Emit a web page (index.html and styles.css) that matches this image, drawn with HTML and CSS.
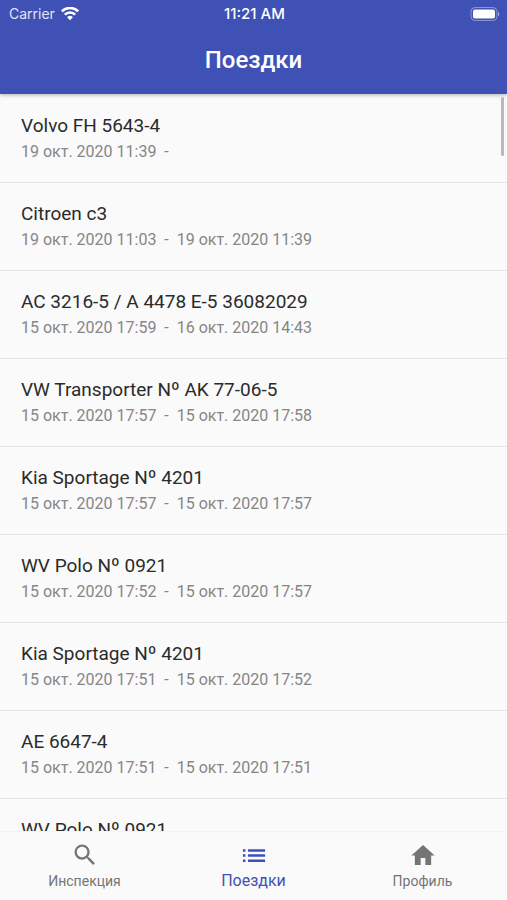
FILE: index.html
```html
<!DOCTYPE html>
<html lang="ru">
<head>
    <meta charset="UTF-8">
    <meta name="viewport" content="width=device-width, initial-scale=1.0">
    <title>Поездки</title>
    <link rel="stylesheet" href="styles.css">
</head>
<body>
    <header class="header">
        <div class="status-bar">
            <div class="carrier">
                <span>Carrier</span>
                <svg class="wifi" viewBox="0 0 18 14" fill="none" stroke="#fff" stroke-width="2.6">
                    <path d="M0.9 4.3a11.5 11.5 0 0 1 16.2 0"/>
                    <path d="M3.8 7.6a7.4 7.4 0 0 1 10.4 0"/>
                    <path d="M9 13.2L6.1 10.3a4.1 4.1 0 0 1 5.8 0z" fill="#fff" stroke="none"/>
                </svg>
            </div>
            <span class="time">11:21 AM</span>
            <svg class="battery" viewBox="0 0 30 14">
                <rect x="1" y="0.5" width="26" height="13" rx="4" fill="none" stroke="#fff" stroke-opacity="0.4"/>
                <rect x="3" y="2.5" width="22" height="9" rx="2" fill="#fff"/>
                <path d="M28 4.7v4.6c1.8-.8 1.8-3.8 0-4.6z" fill="#fff" fill-opacity="0.5"/>
            </svg>
        </div>
        <h1>Поездки</h1>
    </header>
    <main class="content">
        <ul class="trips">
            <li class="trip">
                <div class="trip-name">Volvo FH 5643-4</div>
                <div class="trip-dates">19 окт. 2020 11:39 &nbsp;-</div>
            </li>
            <li class="trip">
                <div class="trip-name">Citroen c3</div>
                <div class="trip-dates">19 окт. 2020 11:03 &nbsp;- &nbsp;19 окт. 2020 11:39</div>
            </li>
            <li class="trip">
                <div class="trip-name">AC 3216-5 / A 4478 E-5 36082029</div>
                <div class="trip-dates">15 окт. 2020 17:59 &nbsp;- &nbsp;16 окт. 2020 14:43</div>
            </li>
            <li class="trip">
                <div class="trip-name">VW Transporter Nº AK 77-06-5</div>
                <div class="trip-dates">15 окт. 2020 17:57 &nbsp;- &nbsp;15 окт. 2020 17:58</div>
            </li>
            <li class="trip">
                <div class="trip-name">Kia Sportage Nº 4201</div>
                <div class="trip-dates">15 окт. 2020 17:57 &nbsp;- &nbsp;15 окт. 2020 17:57</div>
            </li>
            <li class="trip">
                <div class="trip-name">WV Polo Nº 0921</div>
                <div class="trip-dates">15 окт. 2020 17:52 &nbsp;- &nbsp;15 окт. 2020 17:57</div>
            </li>
            <li class="trip">
                <div class="trip-name">Kia Sportage Nº 4201</div>
                <div class="trip-dates">15 окт. 2020 17:51 &nbsp;- &nbsp;15 окт. 2020 17:52</div>
            </li>
            <li class="trip">
                <div class="trip-name">AE 6647-4</div>
                <div class="trip-dates">15 окт. 2020 17:51 &nbsp;- &nbsp;15 окт. 2020 17:51</div>
            </li>
            <li class="trip">
                <div class="trip-name">WV Polo Nº 0921</div>
            </li>
        </ul>
        <div class="scroll-thumb"></div>
    </main>
    <nav class="tabs">
        <a class="tab" href="#inspection">
            <svg viewBox="0 0 24 24"><path d="M15.5 14h-.79l-.28-.27A6.471 6.471 0 0 0 16 9.5 6.5 6.5 0 1 0 9.5 16c1.61 0 3.09-.59 4.23-1.57l.27.28v.79l5 4.99L20.49 19l-4.99-5zm-6 0C7.01 14 5 11.99 5 9.5S7.01 5 9.5 5 14 7.01 14 9.5 11.99 14 9.5 14z"/></svg>
            <span>Инспекция</span>
        </a>
        <a class="tab active" href="#trips">
            <svg viewBox="0 0 24 24"><path d="M2.5 7h2.2v2.2H2.5zM2.5 11.4h2.2v2.2H2.5zM2.5 15.8h2.2V18H2.5zM6.8 7H21.5v2.2H6.8zM6.8 11.4H21.5v2.2H6.8zM6.8 15.8H21.5V18H6.8z"/></svg>
            <span>Поездки</span>
        </a>
        <a class="tab" href="#profile">
            <svg viewBox="0 0 24 24"><path d="M10 20.5v-6h4v6h5v-8h3L12 3.5 2 12.5h3v8z"/></svg>
            <span>Профиль</span>
        </a>
    </nav>
</body>
</html>
```
FILE: styles.css
```css
* {
    box-sizing: border-box;
}
body {
    font-family: Roboto, 'Liberation Sans', sans-serif;
    background-color: #fafafa;
    display: flex;
    flex-direction: column;
    height: 100vh;
    margin: 0;
}
.header {
    flex: none;
    position: relative;
    z-index: 1;
    background-color: #3f51b5;
    color: #ffffff;
    box-shadow: 0 1px 4px rgba(0, 0, 0, 0.3);
}
.status-bar {
    display: grid;
    grid-template-columns: 1fr auto 1fr;
    align-items: center;
    height: 27px;
    padding: 0 7px 0 9px;
    font-family: Inter, Roboto, sans-serif;
    font-size: 14px;
}
.carrier {
    display: flex;
    align-items: center;
    gap: 6px;
    color: #e2e5f4;
}
.wifi {
    width: 18px;
    height: 14px;
}
.time {
    font-size: 15px;
    font-weight: 500;
}
.battery {
    width: 30px;
    height: 14px;
    justify-self: end;
}
h1 {
    margin: 0;
    padding: 17px 0 18px;
    font-size: 24px;
    line-height: 32px;
    font-weight: 500;
    text-align: center;
}
.content {
    flex: 1;
    min-height: 0;
    position: relative;
}
.trips {
    height: 100%;
    margin: 0;
    padding: 1px 0 0;
    list-style: none;
    overflow-y: auto;
    scrollbar-width: none;
}
.trip {
    padding: 18px 21px;
    border-bottom: 1px solid #e6e6e6;
}
.trip-name {
    font-size: 19px;
    line-height: 26px;
    color: #2b2b2b;
}
.trip-dates {
    font-size: 16px;
    line-height: 25px;
    color: #868686;
}
.scroll-thumb {
    position: absolute;
    top: 3px;
    right: 3px;
    width: 3px;
    height: 59px;
    border-radius: 2px;
    background-color: #b9b9b9;
}
.tabs {
    flex: none;
    display: flex;
    height: 69px;
    border-top: 1px solid #f3f3f3;
}
.tab {
    flex: 1;
    display: flex;
    flex-direction: column;
    align-items: center;
    padding-top: 9px;
    font-size: 14px;
    line-height: 24px;
    color: #757575;
    text-decoration: none;
}
.tab svg {
    width: 28px;
    height: 28px;
    fill: currentColor;
}
.tab.active {
    font-size: 16px;
    color: #3f51b5;
}
```
